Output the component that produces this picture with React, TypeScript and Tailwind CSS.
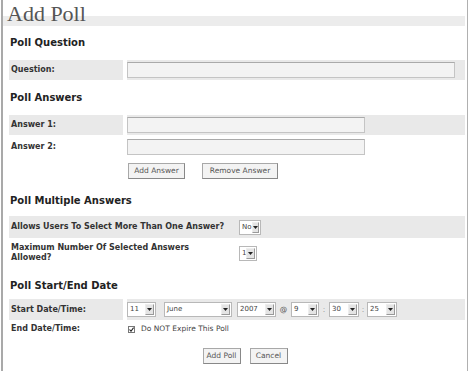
import React from "react";

const sans = { fontFamily: '"DejaVu Sans", Verdana, sans-serif' };

function Select({ value, width }: { value: string; width: number }) {
  return (
    <div
      className="inline-flex h-[15px] items-center justify-between border border-[#b8b8b8] bg-white pl-[2px] pr-[1px] text-[7px] text-[#444]"
      style={{ width }}
    >
      <span>{value}</span>
      <span className="flex h-[11px] w-[9px] items-center justify-center border border-[#999] border-l-[#eee] border-t-[#eee] bg-[#e4e4e4]">
        <svg width="5" height="3" viewBox="0 0 5 3">
          <path d="M0 0h5L2.5 3z" fill="#222" />
        </svg>
      </span>
    </div>
  );
}

function Button({ label, width }: { label: string; width: number }) {
  return (
    <div
      className="flex h-[16px] items-center justify-center border border-[#a8a8a8] border-b-[#888] border-r-[#888] bg-[#f3f3f3] text-[7.5px] text-[#555]"
      style={{ width }}
    >
      {label}
    </div>
  );
}

function Heading({ children, className }: { children: React.ReactNode; className: string }) {
  return <div className={`h-[14px] pl-[1px] text-[10px] font-bold leading-[14px] text-[#222] ${className}`}>{children}</div>;
}

function Row({
  label,
  gray,
  height,
  children,
  className = "",
}: {
  label: React.ReactNode;
  gray: boolean;
  height: number;
  children?: React.ReactNode;
  className?: string;
}) {
  const bg = gray ? "bg-[#e9e9e9]" : "bg-white";
  return (
    <div className={`flex gap-[4px] ${className}`} style={{ height }}>
      <div className={`flex w-[114px] items-center px-[2px] text-[8px] font-bold leading-[10px] text-[#333] ${bg}`}>
        {label}
      </div>
      <div className={`flex flex-1 items-center ${bg}`}>{children}</div>
    </div>
  );
}

function TextInput({ width }: { width: number }) {
  return <div className="h-[16px] border border-[#c4c4c4] border-t-[#aaa] bg-[#f3f3f3]" style={{ width }} />;
}

export default function App() {
  return (
    <div className="h-[371px] w-[470px] bg-white" style={sans}>
      <div className="ml-[1px] mr-[2px] h-full border-l-2 border-r border-l-[#a9a9a9] border-r-[#b0b0b0] pl-[6px] pr-[2px]">
        <div className="relative h-[30px]">
          <div className="absolute left-[-6px] right-0 top-[16px] h-[10px] bg-[#ececec]" />
          <div
            className="relative -ml-[2px] pt-[2px] text-[22px] leading-[24px] text-[#555]"
            style={{ fontFamily: '"Liberation Serif", "DejaVu Serif", serif' }}
          >
            Add Poll
          </div>
        </div>

        <Heading className="mt-[6px]">Poll Question</Heading>
        <Row label="Question:" gray height={20} className="mt-[10px]">
          <TextInput width={328} />
        </Row>

        <Heading className="mt-[11px]">Poll Answers</Heading>
        <Row label="Answer 1:" gray height={20} className="mt-[10px]">
          <TextInput width={238} />
        </Row>
        <Row label="Answer 2:" gray={false} height={20} className="mt-[2px]">
          <TextInput width={238} />
        </Row>
        <div className="mt-[2px] flex h-[24px] items-center gap-[17px] pl-[119px]">
          <Button label="Add Answer" width={57} />
          <Button label="Remove Answer" width={76} />
        </div>

        <Heading className="mt-[11px]">Poll Multiple Answers</Heading>
        <div className="mt-[8px] flex h-[22px] items-center bg-[#e9e9e9]">
          <div className="w-[230px] whitespace-nowrap px-[2px] text-[8px] font-bold leading-[10px] text-[#333]">
            Allows Users To Select More Than One Answer?
          </div>
          <Select value="No" width={22} />
        </div>
        <div className="mt-[2px] flex h-[26px] items-center">
          <div className="w-[230px] px-[2px] text-[8px] font-bold leading-[10px] text-[#333]">
            <div className="w-[200px]">Maximum Number Of Selected Answers Allowed?</div>
          </div>
          <Select value="1" width={18} />
        </div>

        <Heading className="mt-[13px]">Poll Start/End Date</Heading>
        <Row label="Start Date/Time:" gray height={21} className="mt-[6px]">
          <div className="flex items-center text-[7.5px] text-[#555]">
            <Select value="11" width={29} />
            <div className="w-[8px]" />
            <Select value="June" width={68} />
            <div className="w-[5px]" />
            <Select value="2007" width={39} />
            <span className="w-[15px] text-center">@</span>
            <Select value="9" width={28} />
            <span className="w-[10px] text-center text-[#999]">:</span>
            <Select value="30" width={30} />
            <span className="w-[8px] text-center text-[#999]">:</span>
            <Select value="25" width={30} />
          </div>
        </Row>
        <Row label="End Date/Time:" gray={false} height={14} className="mt-[2px]">
          <div className="flex items-center gap-[6px] pl-[1px] text-[7.5px] text-[#444]">
            <span className="flex h-[7px] w-[7px] items-center justify-center border border-[#777] bg-white">
              <svg width="5" height="5" viewBox="0 0 5 5">
                <path d="M0.5 2.5l1.5 1.7L4.6 0.6" stroke="#222" strokeWidth="1.1" fill="none" />
              </svg>
            </span>
            <span>Do NOT Expire This Poll</span>
          </div>
        </Row>

        <div className="mt-[12px] flex justify-center gap-[9px] pl-[16px]">
          <Button label="Add Poll" width={38} />
          <Button label="Cancel" width={38} />
        </div>
      </div>
    </div>
  );
}
